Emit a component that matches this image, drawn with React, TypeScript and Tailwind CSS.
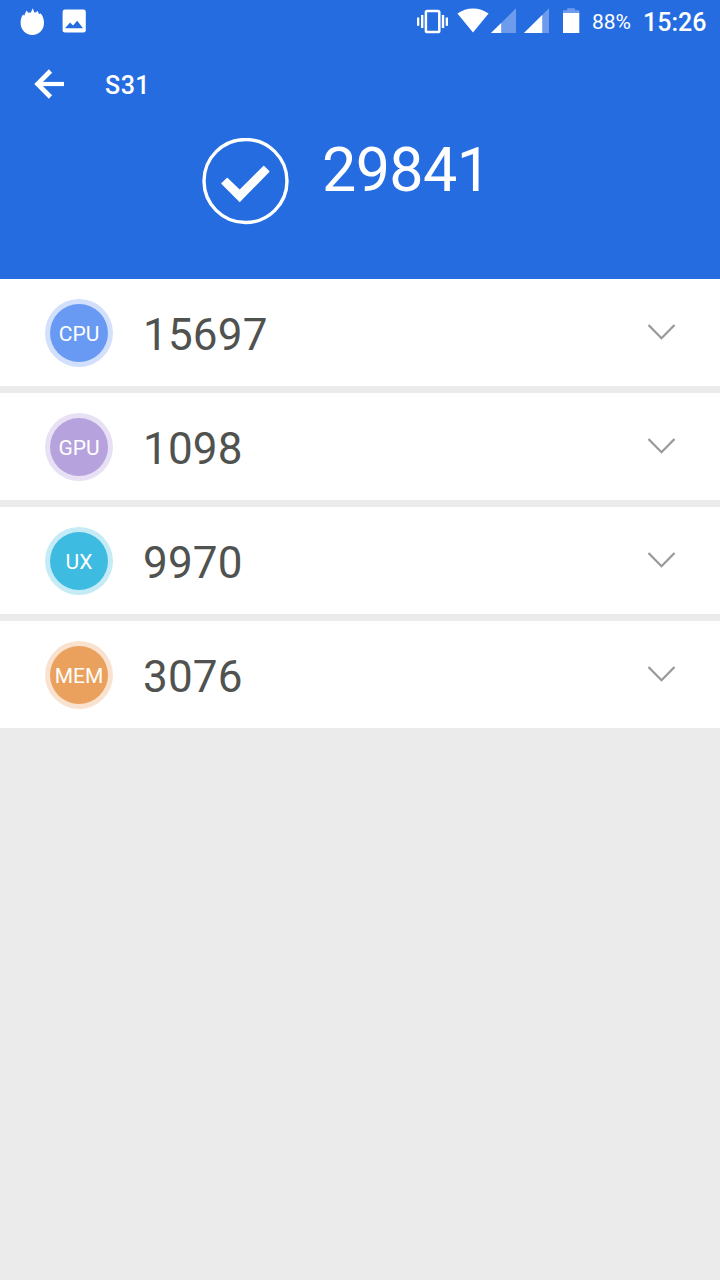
import { clsx } from "clsx"

interface ScoreRow {
  label: string
  score: string
  ring: string
  fill: string
}

const scoreRows: ScoreRow[] = [
  { label: "CPU", score: "15697", ring: "bg-[#d2e0fb]", fill: "bg-[#689af3]" },
  { label: "GPU", score: "1098", ring: "bg-[#e8e1f5]", fill: "bg-[#b6a2dd]" },
  { label: "UX", score: "9970", ring: "bg-[#c5ebf6]", fill: "bg-[#3dbbe1]" },
  { label: "MEM", score: "3076", ring: "bg-[#f9e2cf]", fill: "bg-[#eaa15d]" },
]

function StatusBar() {
  return (
    <div className="flex h-[42px] items-start text-white">
      {/* Notifications */}
      <svg className="ml-5 shrink-0" width="25" height="42" viewBox="20 0 25 42" fill="currentColor">
        <path d="M32.3 35C25.8 35 20.6 29.8 20.6 23C20.6 19.4 21.4 16.4 23 14.4L24.2 15.8L26.4 10.6L28.4 12.8L30.8 12.6L32.8 8.2L34.4 12.4L36.2 12.2L37.6 10.8L39 14L40.8 13.6C42.8 16 44 19.4 44 23C44 29.8 38.9 35 32.3 35Z" />
      </svg>
      <svg className="ml-[17px] shrink-0" width="25" height="42" viewBox="62 0 25 42">
        <rect x="62.6" y="9.6" width="23.2" height="23" rx="2.4" fill="currentColor" />
        <path d="M65 28.2L70.1 22.6L73 25.6L77.2 20.8L83 28.2Z" fill="#256ce1" />
      </svg>

      <div className="ml-auto flex">
        {/* Vibrate */}
        <svg className="shrink-0" width="32" height="42" viewBox="417 0 32 42" fill="currentColor">
          <rect x="425.9" y="11.1" width="13.4" height="21" rx="1.4" fill="none" stroke="currentColor" strokeWidth="2.5" />
          <rect x="417" y="17.5" width="2.3" height="8.3" />
          <rect x="421" y="15" width="2.4" height="13" />
          <rect x="441.8" y="15" width="2.4" height="13" />
          <rect x="445.7" y="17.5" width="2.3" height="8.3" />
        </svg>
        {/* Wifi */}
        <svg className="ml-2 shrink-0" width="32" height="42" viewBox="457 0 32 42" fill="currentColor">
          <path d="M473 32.6L457.4 13.6C462 10.1 467.3 8.4 473 8.4C478.7 8.4 484 10.1 488.6 13.6Z" />
        </svg>
        {/* Mobile signal */}
        <svg className="ml-0.5 shrink-0" width="26" height="42" viewBox="491 0 26 42" fill="currentColor">
          <path d="M491 33L516 8.3V33Z" opacity="0.33" />
          <path d="M491 33L501.2 22.9V33Z" />
        </svg>
        <svg className="ml-[7px] shrink-0" width="26" height="42" viewBox="524 0 26 42" fill="currentColor">
          <path d="M524 33L549 8.3V33Z" opacity="0.33" />
          <path d="M524 33L542.2 15V33Z" />
        </svg>
        {/* Battery */}
        <svg className="ml-3 shrink-0" width="18" height="42" viewBox="562 0 18 42" fill="currentColor">
          <path d="M563 13V10.3H567.2V8.3H575V10.3H579.3V13Z" opacity="0.33" />
          <rect x="563" y="13" width="16.3" height="20" />
        </svg>
        <span className="ml-3 w-[51px] text-[21px] leading-[45px]">88%</span>
        <span className="w-[77px] text-[25px] leading-[45px] font-medium">15:26</span>
      </div>
    </div>
  )
}

function Header() {
  return (
    <header className="h-[279px] bg-[#256ce1] text-white">
      <StatusBar />

      <div className="flex h-[84px] items-center pl-[27px]">
        <svg className="shrink-0" width="44" height="44" viewBox="27.5 62 44 44" fill="none" stroke="currentColor">
          <path d="M51 71L38 84L51 97" strokeWidth="4.6" />
          <path d="M38 84H64.5" strokeWidth="4.2" />
        </svg>
        <h1 className="ml-[34px] pt-0.5 text-[25px] leading-none font-medium tracking-[0.5px]">S31</h1>
      </div>

      <div className="flex items-start pt-3 pl-[202px]">
        <svg className="shrink-0" width="87" height="87" viewBox="202 138 87 87">
          <circle cx="245.5" cy="181" r="41.5" fill="none" stroke="currentColor" strokeWidth="3.4" />
          <path
            d="M222 183.5L227.2 178.4L239.7 190.4L263.8 166.6L268.8 171.6L239.7 201.2Z"
            fill="currentColor"
            stroke="currentColor"
            strokeWidth="1.4"
            strokeLinejoin="round"
          />
        </svg>
        <span className="ml-[33px] text-[61px] leading-[64px] tracking-[-0.6px]">29841</span>
      </div>
    </header>
  )
}

function Row({ row }: { row: ScoreRow }) {
  return (
    <li className="flex h-[107px] items-center bg-white pr-[44px] pl-[45px]">
      <div className={clsx("flex size-[68px] items-center justify-center rounded-full", row.ring)}>
        <div className={clsx("flex size-[58px] items-center justify-center rounded-full pt-[5px] text-[21px] text-white", row.fill)}>
          {row.label}
        </div>
      </div>
      <span className="ml-[30px] pt-1 text-[44px] leading-none tracking-[0.2px] text-[#50524f]">{row.score}</span>
      <svg className="ml-auto" width="29" height="18" viewBox="0 0 29 18" fill="none">
        <path d="M1.5 1L14.5 14.2L27.5 1" stroke="#999999" strokeWidth="2.3" />
      </svg>
    </li>
  )
}

export default function App() {
  return (
    <div className="min-h-screen w-full bg-[#ebebeb] font-[Roboto,sans-serif]">
      <Header />
      <ul className="flex flex-col gap-[7px]">
        {scoreRows.map((row) => (
          <Row key={row.label} row={row} />
        ))}
      </ul>
    </div>
  )
}
